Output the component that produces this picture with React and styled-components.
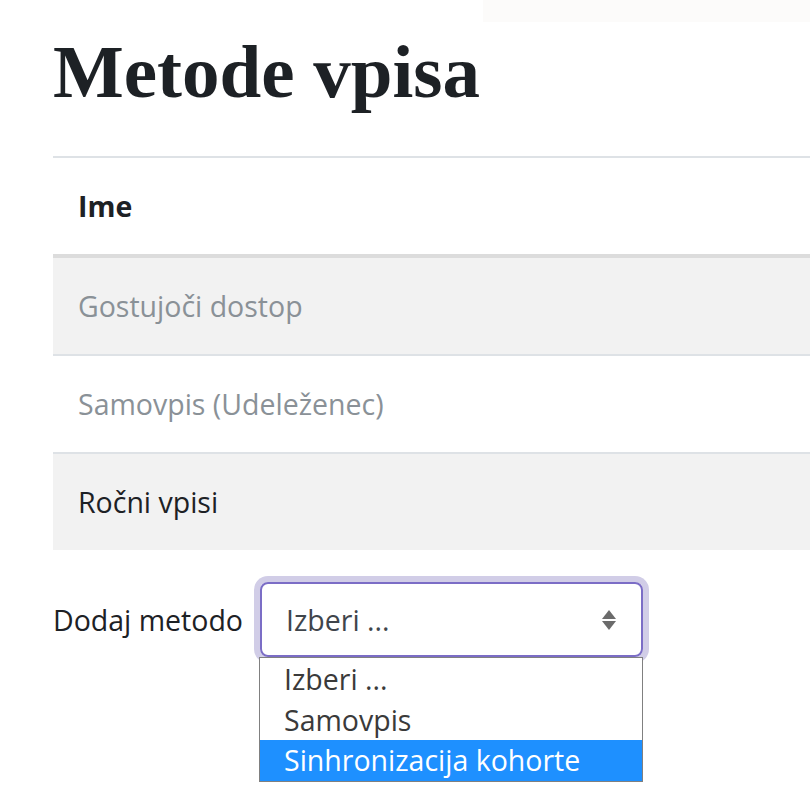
import React from 'react';
import styled, { createGlobalStyle } from 'styled-components';

const GlobalStyle = createGlobalStyle`
  html, body {
    margin: 0;
    padding: 0;
    background: #fff;
  }
  body {
    font-family: 'Open Sans', 'Noto Sans', sans-serif;
    color: #1d2125;
    overflow: hidden;
  }
`;

const Page = styled.div`
  width: 810px;
  height: 811px;
  overflow: hidden;
  display: flex;
  flex-direction: column;
`;

const TopStrip = styled.div`
  align-self: flex-end;
  width: 327px;
  height: 22px;
  background: #fcfbfa;
`;

const Content = styled.div`
  padding-left: 53px;
  display: flex;
  flex-direction: column;
`;

const Title = styled.h1`
  margin: 0;
  font-family: 'Liberation Serif', 'DejaVu Serif', serif;
  font-weight: 700;
  font-size: 75px;
  line-height: 100px;
  color: #1d2125;
`;

const Table = styled.div`
  margin-top: 34px;
  width: 757px;
  border-top: 2px solid #dee2e6;
`;

const Row = styled.div`
  height: ${p => p.$h || 96}px;
  display: flex;
  align-items: center;
  padding-left: 25px;
  font-size: 28.5px;
  background: ${p => (p.$striped ? '#f2f2f2' : '#fff')};
  color: ${p => (p.$muted ? '#8a9197' : '#1d2125')};
  font-weight: ${p => (p.$head ? 700 : 400)};
  border-bottom: ${p => p.$border || '2px solid #dee2e6'};
`;

const AddRow = styled.div`
  margin-top: 32px;
  display: flex;
  align-items: flex-start;
`;

const Label = styled.label`
  font-size: 28.5px;
  color: #1d2125;
  margin-top: 19px;
  width: 207px;
`;

const SelectWrap = styled.div`
  position: relative;
  width: 383px;
`;

const SelectBox = styled.div`
  box-sizing: border-box;
  height: 75px;
  border: 2px solid #7b6dc6;
  border-radius: 8px;
  box-shadow: 0 0 0 6px #d1cde7;
  display: flex;
  align-items: center;
  justify-content: space-between;
  padding: 0 24px 0 24px;
  font-size: 28.5px;
  color: #3f454b;
`;

const Arrows = styled.svg`
  width: 16px;
  height: 22px;
`;

const Dropdown = styled.ul`
  position: absolute;
  top: 75px;
  left: -1px;
  width: 384px;
  margin: 0;
  padding: 1px 0 0;
  list-style: none;
  background: #fff;
  border: 1px solid #808080;
  box-sizing: border-box;
`;

const Option = styled.li`
  height: 40.5px;
  display: flex;
  align-items: center;
  padding-left: 24px;
  font-size: 28.5px;
  color: ${p => (p.$active ? '#fff' : '#3a3a3a')};
  background: ${p => (p.$active ? '#1e90ff' : 'transparent')};
`;

export default function App() {
  return (
    <Page>
      <GlobalStyle />
      <TopStrip />
      <Content>
        <Title>Metode vpisa</Title>
        <Table>
          <Row $head $h={96} $border="4px solid #dcdcdc">Ime</Row>
          <Row $striped $muted>Gostujoči dostop</Row>
          <Row $muted>Samovpis (Udeleženec)</Row>
          <Row $striped $border="none">Ročni vpisi</Row>
        </Table>
        <AddRow>
          <Label>Dodaj metodo</Label>
          <SelectWrap>
            <SelectBox>
              <span>Izberi ...</span>
              <Arrows viewBox="0 0 16 22">
                <path d="M8 1 L15 10 L1 10 Z" fill="#6b6b6b" />
                <path d="M1 12 L15 12 L8 21 Z" fill="#6b6b6b" />
              </Arrows>
            </SelectBox>
            <Dropdown>
              <Option>Izberi ...</Option>
              <Option>Samovpis</Option>
              <Option $active>Sinhronizacija kohorte</Option>
            </Dropdown>
          </SelectWrap>
        </AddRow>
      </Content>
    </Page>
  );
}
